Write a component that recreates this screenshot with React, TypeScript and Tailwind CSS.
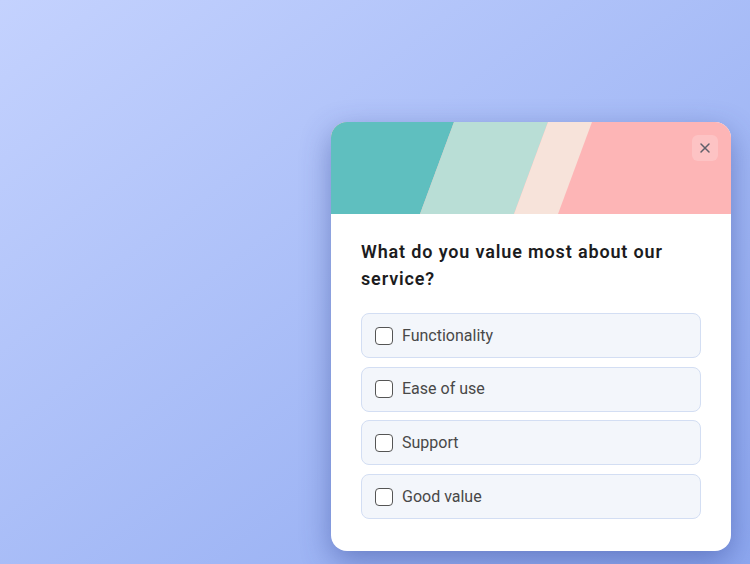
import React from "react";

const options = ["Functionality", "Ease of use", "Support", "Good value"];

export default function App() {
  return (
    <div
      className="flex h-[564px] w-full items-end justify-end bg-gradient-to-br from-[#c4d2fe] to-[#8ea8f0] pb-[13px] pr-[19px]"
      style={{ fontFamily: "Roboto, 'Noto Sans', sans-serif" }}
    >
      <div className="w-[400px] overflow-hidden rounded-2xl bg-white shadow-[0_10px_30px_rgba(40,60,140,0.45)]">
        <div className="relative h-[92px]">
          <svg width="400" height="92" viewBox="0 0 400 92" className="block">
            <rect x="0" y="0" width="400" height="92" fill="#fdb5b6" />
            <polygon points="0,0 123,0 89,92 0,92" fill="#5fbfbf" />
            <polygon points="123,0 217,0 183,92 89,92" fill="#b9ded6" />
            <polygon points="217,0 261,0 227,92 183,92" fill="#f7e3da" />
          </svg>
          <button className="absolute right-[13px] top-[13px] flex h-[26px] w-[26px] items-center justify-center rounded-md bg-white/20">
            <svg width="12" height="12" viewBox="0 0 12 12" fill="none" stroke="#5f5f6a" strokeWidth="1.5" strokeLinecap="round">
              <path d="M2 2L10 10M10 2L2 10" />
            </svg>
          </button>
        </div>
        <div className="px-[30px] pb-[32px] pt-6">
          <h2 className="mb-[21px] text-[18px] font-semibold leading-[27px] tracking-[0.85px] text-[#1c1c1e]">
            What do you value most about our service?
          </h2>
          <div className="flex flex-col gap-[8.67px]">
            {options.map((o) => (
              <label
                key={o}
                className="flex h-[45px] items-center gap-[9px] rounded-lg border border-[#d3def3] bg-[#f3f6fb] pl-[13px]"
              >
                <span className="h-[18px] w-[18px] rounded-[4px] border-[1.5px] border-[#555] bg-white" />
                <span className="text-[16px] text-[#484848]">{o}</span>
              </label>
            ))}
          </div>
        </div>
      </div>
    </div>
  );
}
